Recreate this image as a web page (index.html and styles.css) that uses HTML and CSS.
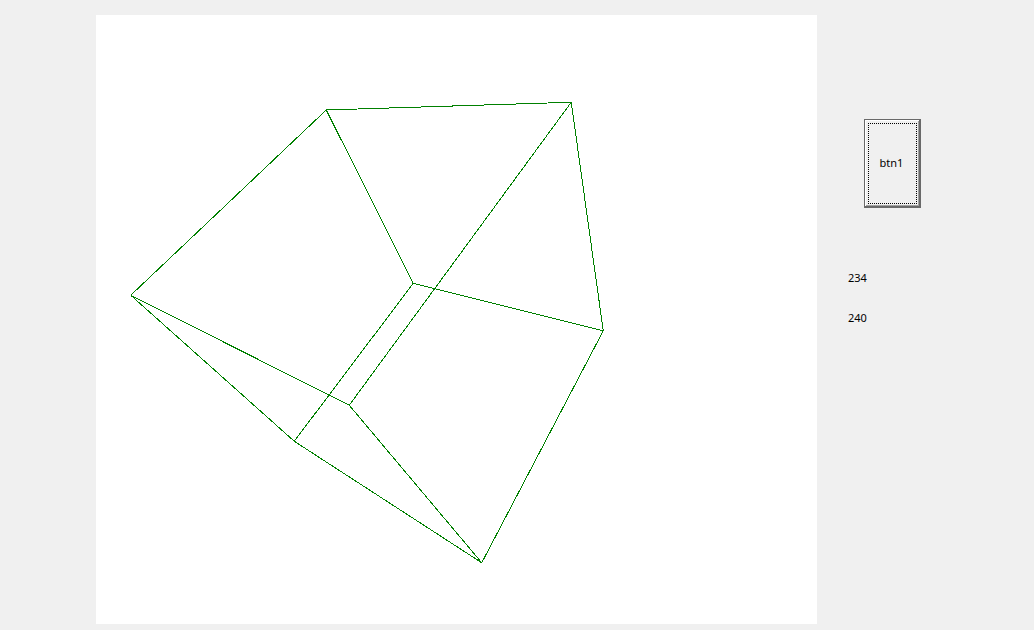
FILE: index.html
```html
<!DOCTYPE html>
<html lang="en">
<head>
<meta charset="utf-8">
<title>Cube</title>
<link rel="stylesheet" href="styles.css">
</head>
<body>
<main class="app">
  <section class="canvas">
    <svg class="drawing" width="721" height="609" viewBox="95.75 14.75 721 609">
      <g class="edges">
        <line x1="326" y1="109.75" x2="571" y2="102"/>
        <line x1="326" y1="109.75" x2="413" y2="283"/>
        <line x1="326" y1="109.75" x2="130.5" y2="295"/>
        <line x1="571" y1="102" x2="603" y2="330.5"/>
        <line x1="571" y1="102" x2="349" y2="405"/>
        <line x1="603" y1="330.5" x2="413" y2="283"/>
        <line x1="603" y1="330.5" x2="481.5" y2="562.5"/>
        <line x1="413" y1="283" x2="294" y2="441"/>
        <line x1="130.5" y1="295" x2="349" y2="405"/>
        <line x1="130.5" y1="295" x2="294" y2="441"/>
        <line x1="349" y1="405" x2="481.5" y2="562.5"/>
        <line x1="294" y1="441" x2="481.5" y2="562.5"/>
      </g>
    </svg>
  </section>
  <aside class="side">
    <button class="btn" type="button"><span class="btn-focus"><span class="btn-text">btn1</span></span></button>
    <div class="labels">
      <span class="label">234</span>
      <span class="label">240</span>
    </div>
  </aside>
</main>
</body>
</html>
```
FILE: styles.css
```css
html, body {
  margin: 0;
  height: 100%;
  background: #f0f0f0;
  overflow: hidden;
}

.app {
  display: flex;
  align-items: flex-start;
  height: 630px;
  box-sizing: border-box;
  padding: 15px 0 0 96px;
  font-family: "Noto Sans", "Liberation Sans", sans-serif;
  font-size: 11px;
  color: #000;
}

.canvas {
  width: 721px;
  height: 609px;
  background: #fff;
  flex: none;
}

.drawing {
  display: block;
}

.edges line {
  stroke: #008000;
  stroke-width: 1;
  shape-rendering: crispEdges;
}

.side {
  display: flex;
  flex-direction: column;
  padding: 104px 0 0 31px;
}

.btn {
  width: 57px;
  height: 89px;
  margin: 0 0 0 16px;
  padding: 0;
  box-sizing: border-box;
  background: #f0f0f0;
  border: 1px solid #696969;
  border-right-width: 2px;
  border-bottom-width: 2px;
  box-shadow: inset 1px 1px 0 #fff, inset -1px -1px 0 #a0a0a0;
  font: inherit;
  color: inherit;
  display: flex;
}

.btn-focus {
  flex: 1;
  margin: 3px 2px 2px 3px;
  border: 1px dotted #000;
  display: flex;
  align-items: center;
  justify-content: center;
}

.btn-text {
  margin: 0 2px 2px 0;
}

.labels {
  display: flex;
  flex-direction: column;
  gap: 25px;
  margin-top: 62px;
}

.label {
  line-height: 15px;
}
```
